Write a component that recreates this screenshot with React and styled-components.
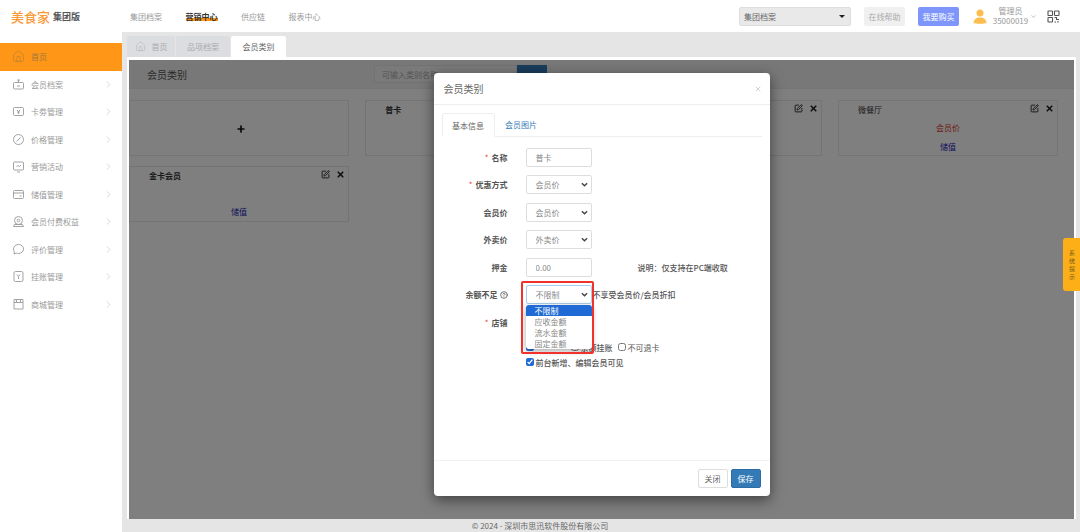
import React from 'react'
import styled, { createGlobalStyle } from 'styled-components'
import { ChevronRight, ChevronDown, House, SquarePen, X, Plus, CircleHelp } from 'lucide-react'

const GlobalStyle = createGlobalStyle`
  html, body { margin: 0; padding: 0; height: 100%; overflow: hidden; background: #fff; }
  #root { height: 100%; }
  * { box-sizing: border-box; }
  body { font-family: "Noto Sans CJK SC", "Liberation Sans", sans-serif; font-size: 8px; color: #555; }
`

const glyphs = {
  member: <><rect x="1.5" y="4.5" width="10" height="6.5" rx="1" /><path d="M6.5 4.5V2M5 2h3M5 8h3" /></>,
  card: <><rect x="1.5" y="2.5" width="10" height="8" rx="1" /><path d="M5 5l1.5 1.5L8 5M6.5 6.5V9M5 7h3" /></>,
  price: <><circle cx="6.5" cy="6.5" r="5" /><path d="M4.5 8.5l4-4" /></>,
  promo: <><path d="M2.5 2h8a1 1 0 0 1 1 1v6a1 1 0 0 1-1 1h-8a1 1 0 0 1-1-1V3a1 1 0 0 1 1-1zM5 12h3" /><path d="M4.5 6.5l1.5-1 1.5 1L9 5" /></>,
  store: <><rect x="1.5" y="2.5" width="10" height="8" rx="1" /><path d="M1.5 5h10M7.5 8h2" /></>,
  paid: <><circle cx="6.5" cy="5.5" r="4" /><circle cx="6.5" cy="5.5" r="1.3" /><path d="M1.5 11.5h10l-1-2h-8z" /></>,
  review: <><path d="M6.5 1.5c3 0 5 2 5 4.5s-2 4.5-5 4.5c-.8 0-1.5-.1-2.2-.4L2 11l.4-2.3C1.8 8 1.5 7 1.5 6c0-2.5 2-4.5 5-4.5z" /><path d="M4.5 6h.1M6.5 6h.1M8.5 6h.1" /></>,
  credit: <><rect x="2" y="1.5" width="9" height="10" rx="1.5" /><path d="M5 4.5l1.5 2 1.5-2M6.5 6.5V9" /></>,
  mall: <><path d="M2 1.5h9V11H2zM2 4.5h9M4.5 1.5v3M8.5 1.5v3" /></>,
}

const menu = [
  { name: '首页', icon: 'home', active: true },
  { name: '会员档案', icon: 'member' },
  { name: '卡劵管理', icon: 'card' },
  { name: '价格管理', icon: 'price' },
  { name: '营销活动', icon: 'promo' },
  { name: '储值管理', icon: 'store' },
  { name: '会员付费权益', icon: 'paid' },
  { name: '评价管理', icon: 'review' },
  { name: '挂账管理', icon: 'credit' },
  { name: '商城管理', icon: 'mall' },
]

function MenuIcon({ name }) {
  if (name === 'home') return <House size={13} strokeWidth={1} />
  return (
    <svg width="13" height="13" viewBox="0 0 13 13" fill="none" stroke="currentColor" strokeWidth="0.9">
      {glyphs[name]}
    </svg>
  )
}

function CardTools() {
  return (
    <Tools>
      <SquarePen size={9} strokeWidth={2.4} />
      <X size={9} strokeWidth={4.4} />
    </Tools>
  )
}

export default function App() {
  return (
    <Page>
      <GlobalStyle />
      <Header>
        <Logo>美食家<small>集团版</small></Logo>
        <Nav>
          <NavItem>集团档案</NavItem>
          <NavItem $active>营销中心</NavItem>
          <NavItem>供应链</NavItem>
          <NavItem>报表中心</NavItem>
        </Nav>
        <HeaderRight>
          <StoreSelect>集团档案<Caret /></StoreSelect>
          <HelpButton>在线帮助</HelpButton>
          <BuyButton>我要购买</BuyButton>
          <UserIcon>
            <svg width="14" height="15" viewBox="0 0 14 15" fill="#fdbe4f">
              <circle cx="7" cy="4" r="3.5" />
              <path d="M0.5 14c0-3.5 3-5.5 6.5-5.5s6.5 2 6.5 5.5c-2 1-11 1-13 0z" />
            </svg>
          </UserIcon>
          <UserInfo><span>管理员</span><span>35000019</span></UserInfo>
          <ChevronDown size={7} color="#999" />
          <QrIcon>
            <svg width="13" height="13" viewBox="0 0 13 13" fill="none" stroke="#555" strokeWidth="1.1">
              <rect x="1" y="1" width="4.5" height="4.5" rx=".6" />
              <rect x="7.5" y="1" width="4.5" height="4.5" rx=".6" />
              <rect x="1" y="7.5" width="4.5" height="4.5" rx=".6" />
              <path d="M7.5 7.5h2v2H12M7.5 12H9M11 11v1.5" />
            </svg>
          </QrIcon>
        </HeaderRight>
      </Header>

      <Body>
        <Sidebar>
          {menu.map(item => (
            <MenuItem key={item.name} $active={item.active}>
              <MenuIcon name={item.icon} />
              <MenuLabel>{item.name}</MenuLabel>
              {!item.active && <ChevronRight size={11} strokeWidth={1} color="#aaa" />}
            </MenuItem>
          ))}
        </Sidebar>

        <Main>
          <TabBar>
            <PageTab $w={48}><House size={11} strokeWidth={1} />首页</PageTab>
            <PageTab $w={54}>品项档案</PageTab>
            <PageTab $w={55} $active>会员类别</PageTab>
          </TabBar>

          <Panel>
            <Frame>
              <TitleBar>
                <PageTitle>会员类别</PageTitle>
                <SearchInput placeholder="可输入类别名称" readOnly />
                <SearchButton />
              </TitleBar>
              <CardGrid>
                <Card $center><Plus size={10} strokeWidth={4} color="#111" /></Card>
                <Card><CardName>普卡</CardName><CardTools /></Card>
                <Card><CardName>银卡</CardName><CardTools /></Card>
                <Card>
                  <CardName $light>微餐厅</CardName>
                  <CardTools />
                  <PriceText>会员价</PriceText>
                  <StoreLink>储值</StoreLink>
                </Card>
                <Card>
                  <CardName>金卡会员</CardName>
                  <CardTools />
                  <StoreLink $low>储值</StoreLink>
                </Card>
              </CardGrid>

              <Overlay>
                <Modal>
                  <ModalHead>
                    <ModalTitle>会员类别</ModalTitle>
                    <X size={8} strokeWidth={2.6} color="#ccc" />
                  </ModalHead>
                  <ModalBody>
                    <ModalTabs>
                      <ModalTab $active>基本信息</ModalTab>
                      <ModalTab>会员图片</ModalTab>
                    </ModalTabs>

                    <FormRow>
                      <FormLabel $required>名称</FormLabel>
                      <TextField defaultValue="普卡" />
                    </FormRow>
                    <FormRow>
                      <FormLabel $required>优惠方式</FormLabel>
                      <SelectField defaultValue="会员价"><option>会员价</option></SelectField>
                    </FormRow>
                    <FormRow>
                      <FormLabel>会员价</FormLabel>
                      <SelectField defaultValue="会员价"><option>会员价</option></SelectField>
                    </FormRow>
                    <FormRow>
                      <FormLabel>外卖价</FormLabel>
                      <SelectField defaultValue="外卖价"><option>外卖价</option></SelectField>
                    </FormRow>
                    <FormRow>
                      <FormLabel>押金</FormLabel>
                      <TextField defaultValue="0.00" />
                      <Note>说明：仅支持在PC端收取</Note>
                    </FormRow>
                    <FormRow>
                      <FormLabel>余额不足 <CircleHelp size={8} strokeWidth={2.4} /></FormLabel>
                      <SelectWrap>
                        <SelectField $focus defaultValue="不限制"><option>不限制</option></SelectField>
                        <Dropdown>
                          <DropdownItem $active>不限制</DropdownItem>
                          <DropdownItem>应收金额</DropdownItem>
                          <DropdownItem>流水金额</DropdownItem>
                          <DropdownItem>固定金额</DropdownItem>
                        </Dropdown>
                        <Highlight />
                      </SelectWrap>
                      <InlineNote>不享受会员价/会员折扣</InlineNote>
                    </FormRow>
                    <FormRow>
                      <FormLabel $required>店铺</FormLabel>
                    </FormRow>
                    <CheckRow>
                      <CheckItem><input type="checkbox" defaultChecked /></CheckItem>
                      <CheckItem $gap={35}><input type="checkbox" />余额挂账</CheckItem>
                      <CheckItem $gap={5} $plain><input type="checkbox" />不可退卡</CheckItem>
                    </CheckRow>
                    <CheckRow>
                      <CheckItem><input type="checkbox" defaultChecked />前台新增、编辑会员可见</CheckItem>
                    </CheckRow>
                  </ModalBody>
                  <ModalFoot>
                    <CloseButton>关闭</CloseButton>
                    <SaveButton>保存</SaveButton>
                  </ModalFoot>
                </Modal>
              </Overlay>
            </Frame>
          </Panel>
          <Footer>© 2024 - 深圳市思迅软件股份有限公司</Footer>
        </Main>
      </Body>

      <SideTip>系统提示</SideTip>
    </Page>
  )
}

const Page = styled.div`
  position: relative;
  display: flex;
  flex-direction: column;
  height: 532px;
  overflow: hidden;
`

const Header = styled.header`
  display: flex;
  align-items: center;
  height: 32px;
  flex-shrink: 0;
  padding: 0 20px 0 11px;
  background: #fff;
`

const Logo = styled.div`
  display: flex;
  align-items: center;
  width: 119px;
  font-size: 13px;
  font-weight: 500;
  color: #fb9a38;
  small {
    margin-left: 3px;
    font-size: 9px;
    font-weight: 700;
    color: #555;
  }
`

const Nav = styled.nav`
  display: flex;
  gap: 23.5px;
`

const NavItem = styled.span`
  font-size: 8px;
  color: ${p => (p.$active ? '#333' : '#999')};
  font-weight: ${p => (p.$active ? 700 : 400)};
  ${p => p.$active && 'background: linear-gradient(transparent 62%, #ff9617 62%, #ff9617 92%, transparent 92%);'}
`

const HeaderRight = styled.div`
  display: flex;
  align-items: center;
  margin-left: auto;
`

const StoreSelect = styled.div`
  display: flex;
  align-items: center;
  justify-content: space-between;
  width: 112px;
  height: 19px;
  padding: 0 5px 0 4px;
  border: 1px solid #ddd;
  border-radius: 2px;
  background: #e9e9e9;
  color: #666;
`

const Caret = styled.i`
  border: 3px solid transparent;
  border-top: 3.5px solid #222;
  border-bottom: 0;
`

const HelpButton = styled.div`
  display: flex;
  align-items: center;
  justify-content: center;
  width: 41px;
  height: 19px;
  margin-left: 13px;
  border-radius: 2px;
  background: #f0f0f0;
  color: #aaa;
`

const BuyButton = styled(HelpButton)`
  margin-left: 13px;
  background: #7e96fb;
  color: #fff;
`

const UserIcon = styled.div`
  display: flex;
  margin-left: 14px;
`

const UserInfo = styled.div`
  display: flex;
  flex-direction: column;
  align-items: center;
  width: 35px;
  margin: 0 2px 0 6px;
  color: #999;
  line-height: 10px;
`

const QrIcon = styled.div`
  display: flex;
  margin-left: 10px;
`

const Body = styled.div`
  display: flex;
  flex: 1;
  min-height: 0;
`

const Sidebar = styled.aside`
  width: 122px;
  flex-shrink: 0;
  padding-top: 11px;
  background: #fff;
`

const MenuItem = styled.div`
  display: flex;
  align-items: center;
  height: 27.5px;
  padding: 0 8px 0 12px;
  color: ${p => (p.$active ? '#a27a3e' : '#999')};
  background: ${p => (p.$active ? '#ff9617' : 'transparent')};
`

const MenuLabel = styled.span`
  flex: 1;
  margin-left: 6px;
`

const Main = styled.main`
  display: flex;
  flex: 1;
  flex-direction: column;
  min-width: 0;
  background: #e5e5e5;
`

const TabBar = styled.div`
  display: flex;
  gap: 1px;
  height: 21px;
  margin: 4px 0 0 5px;
  flex-shrink: 0;
`

const PageTab = styled.div`
  display: flex;
  align-items: center;
  justify-content: center;
  gap: 6px;
  width: ${p => p.$w}px;
  border-radius: 2px 2px 0 0;
  background: ${p => (p.$active ? '#fff' : '#dcdde1')};
  color: ${p => (p.$active ? '#666' : '#aaa')};
`

const Panel = styled.div`
  display: flex;
  flex: 1;
  min-height: 0;
  margin: 0 4px 0 5px;
  padding: 3px 2px 0;
  background: #fff;
`

const Frame = styled.div`
  position: relative;
  flex: 1;
  overflow: hidden;
  background: #fff;
`

const TitleBar = styled.div`
  display: flex;
  align-items: center;
  height: 29px;
  background: #f0f0f0;
  border-bottom: 1px solid #eaeaea;
`

const PageTitle = styled.h2`
  width: 227px;
  margin: 0 0 0 18px;
  font-size: 10px;
  font-weight: 400;
  color: #555;
`

const SearchInput = styled.input`
  width: 143px;
  height: 18px;
  padding: 0 7px;
  border: 1px solid #e5e5e5;
  background: #f4f4f4;
  font: inherit;
  &::placeholder { color: #aaa; }
`

const SearchButton = styled.div`
  width: 30px;
  height: 18px;
  background: #337ab7;
`

const CardGrid = styled.div`
  display: grid;
  grid-template-columns: repeat(4, 220px);
  grid-auto-rows: 56px;
  gap: 10px 16.3px;
  padding-top: 11px;
`

const Card = styled.div`
  position: relative;
  display: flex;
  flex-direction: column;
  align-items: center;
  justify-content: ${p => (p.$center ? 'center' : 'flex-start')};
  ${p => p.$center && 'padding: 2px 0 0 4px;'}
  border: 1px solid #e8e8e8;
`

const CardName = styled.div`
  align-self: flex-start;
  margin: 3px 0 0 19px;
  line-height: 12px;
  font-weight: ${p => (p.$light ? 400 : 700)};
  color: #333;
`

const Tools = styled.div`
  position: absolute;
  top: 3px;
  right: 3px;
  display: flex;
  align-items: center;
  gap: 6px;
  color: #222;
`

const PriceText = styled.div`
  margin-top: 6px;
  line-height: 12px;
  color: #d9342b;
`

const StoreLink = styled.div`
  margin-top: ${p => (p.$low ? 24 : 7)}px;
  line-height: 12px;
  color: #2323b8;
`

const Overlay = styled.div`
  position: absolute;
  inset: 0;
  display: flex;
  justify-content: center;
  padding: 13px 0 23px 0;
  background: rgba(0, 0, 0, 0.5);
`

const Modal = styled.section`
  display: flex;
  flex-direction: column;
  width: 336px;
  border-radius: 4px;
  background: #fff;
  box-shadow: 0 4px 14px rgba(0, 0, 0, 0.5);
`

const ModalHead = styled.div`
  display: flex;
  align-items: center;
  justify-content: space-between;
  height: 32px;
  padding: 0 8px;
  border-bottom: 1px solid #eee;
  flex-shrink: 0;
`

const ModalTitle = styled.h3`
  margin: 0 0 0 2px;
  font-size: 10px;
  font-weight: 400;
  color: #666;
`

const ModalBody = styled.div`
  flex: 1;
  padding: 8px 8px 0;
`

const ModalTabs = styled.div`
  display: flex;
  height: 24px;
  margin-bottom: 10.5px;
  border-bottom: 1px solid #eee;
`

const ModalTab = styled.div`
  display: flex;
  align-items: center;
  justify-content: center;
  width: 53px;
  height: ${p => (p.$active ? 24 : 23)}px;
  color: ${p => (p.$active ? '#666' : '#337ab7')};
  ${p => p.$active && `
    border: 1px solid #eee;
    border-bottom-color: #fff;
    border-radius: 3px 3px 0 0;
    background: #fff;
  `}
`

const FormRow = styled.div`
  display: flex;
  align-items: center;
  height: 19px;
  margin-bottom: 8.5px;
`

const FormLabel = styled.label`
  display: flex;
  align-items: center;
  justify-content: flex-end;
  gap: 2px;
  width: 66px;
  margin-right: 18px;
  font-weight: 700;
  color: #555;
  ${p => p.$required && `
    &::before {
      content: '*';
      margin-right: 1px;
      color: #ee3b3b;
      font-weight: 400;
    }
  `}
`

const TextField = styled.input`
  width: 66px;
  height: 19px;
  padding: 0 9px;
  border: 1px solid #ddd;
  border-radius: 2px;
  font: inherit;
  color: #888;
  outline: none;
`

const SelectField = styled.select`
  display: block;
  width: 66px;
  height: 19px;
  padding: 0 5px 0 9px;
  border: 1px solid ${p => (p.$focus ? '#a9cdea' : '#ddd')};
  border-radius: 2px;
  appearance: none;
  background: #fff url("data:image/svg+xml,%3Csvg xmlns='http://www.w3.org/2000/svg' viewBox='0 0 8 8'%3E%3Cpath d='M1 2.5l3 3 3-3' fill='none' stroke='%23444' stroke-width='1.6'/%3E%3C/svg%3E") no-repeat right 3px center / 7px 7px;
  font: inherit;
  color: #888;
  outline: none;
`

const Note = styled.span`
  margin-left: 46px;
  font-weight: 500;
  color: #555;
`

const InlineNote = styled.span`
  margin-left: 1px;
  font-weight: 500;
  color: #555;
`

const SelectWrap = styled.div`
  position: relative;
  z-index: 1;
`

const Dropdown = styled.ul`
  position: absolute;
  top: 20px;
  left: 0;
  width: 66px;
  height: 44px;
  margin: 0;
  padding: 0;
  list-style: none;
  overflow: hidden;
  border-radius: 3px;
  background: #fff;
  box-shadow: 0 2px 6px rgba(0, 0, 0, 0.35);
`

const DropdownItem = styled.li`
  height: 11px;
  padding-left: 9px;
  line-height: 11px;
  background: ${p => (p.$active ? '#1f6ad4' : 'transparent')};
  color: ${p => (p.$active ? '#fff' : '#888')};
`

const Highlight = styled.div`
  position: absolute;
  top: -4px;
  left: -5px;
  width: 73px;
  height: 73px;
  border: 2px solid #f1312b;
  border-radius: 2px;
  pointer-events: none;
`

const CheckRow = styled.div`
  display: flex;
  align-items: center;
  height: 14px;
  margin: 1px 0 0 84px;
`

const CheckItem = styled.label`
  display: flex;
  align-items: center;
  margin-left: ${p => p.$gap || 0}px;
  font-weight: ${p => (p.$plain ? 400 : 500)};
  color: #555;
  input {
    width: 8px;
    height: 8px;
    margin: 0 2px 0 0;
    accent-color: #1f6ad4;
  }
`

const ModalFoot = styled.div`
  display: flex;
  align-items: flex-start;
  justify-content: flex-end;
  gap: 3px;
  height: 36px;
  padding: 8px 9px 0 0;
  border-top: 1px solid #f2f2f2;
  flex-shrink: 0;
`

const CloseButton = styled.div`
  display: flex;
  align-items: center;
  justify-content: center;
  width: 30px;
  height: 19px;
  border: 1px solid #ddd;
  border-radius: 2px;
  color: #666;
`

const SaveButton = styled(CloseButton)`
  border-color: #2e6da4;
  background: #337ab7;
  color: #fff;
`

const Footer = styled.footer`
  display: flex;
  align-items: center;
  justify-content: center;
  height: 13px;
  padding-right: 122px;
  flex-shrink: 0;
  color: #666;
`

const SideTip = styled.div`
  position: absolute;
  top: 238px;
  right: 0;
  display: flex;
  align-items: center;
  justify-content: center;
  width: 17px;
  height: 53px;
  padding: 0 5px 0 6px;
  border-radius: 3px 0 0 3px;
  background: #fdaf17;
  font-size: 6px;
  line-height: 8px;
  color: #7a5a1c;
  text-align: center;
`
